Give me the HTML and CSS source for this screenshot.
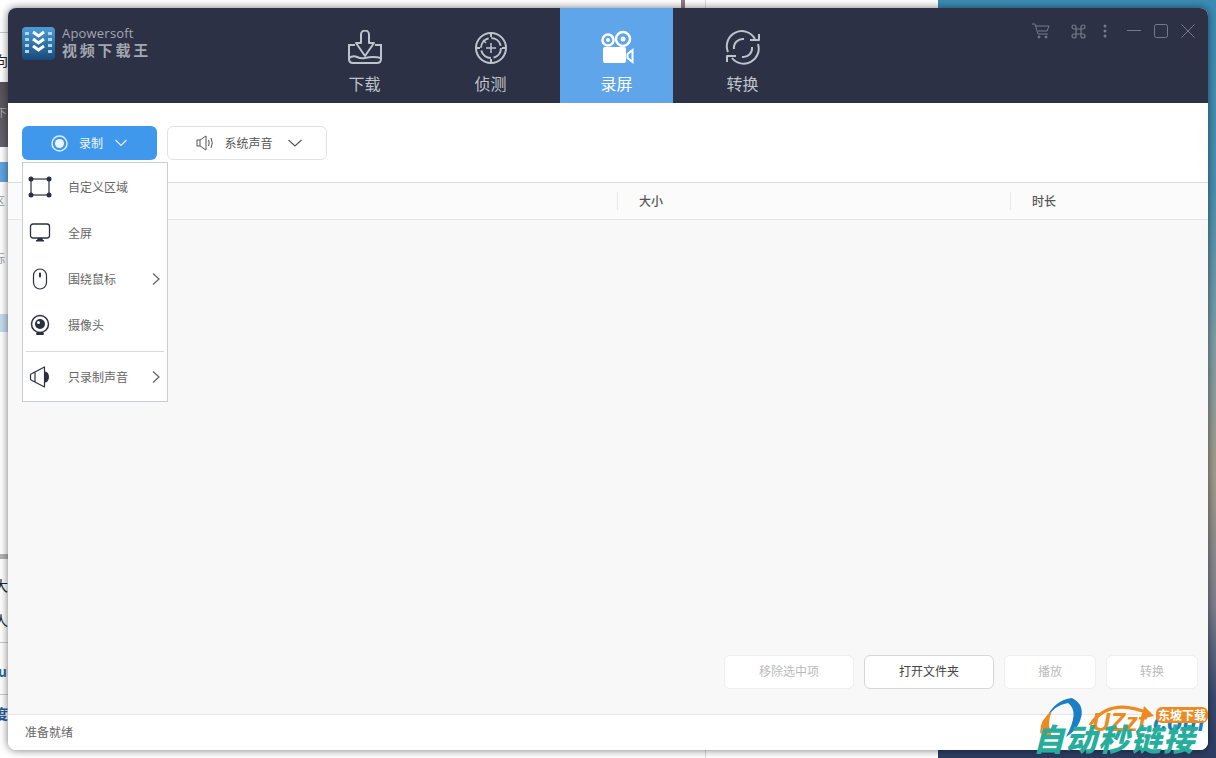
FILE: index.html
```html
<!DOCTYPE html>
<html lang="zh-CN">
<head>
<meta charset="UTF-8">
<meta name="viewport" content="width=device-width, initial-scale=1.0">
<title>Apowersoft 视频下载王</title>
<link rel="stylesheet" href="styles.css">
</head>
<body>
<!-- what is behind the app window -->
<div class="desk">
    <div class="desk-left">
        <div class="frag-line line-a"></div>
        <div class="frag frag-top">向</div>
        <div class="frag-dark">下</div>
        <div class="frag-blue"></div>
        <div class="frag frag-a">区</div>
        <div class="frag frag-b">标</div>
        <div class="frag-light"></div>
        <div class="frag-bar"></div>
        <div class="frag frag-c">大</div>
        <div class="frag frag-d">人</div>
        <div class="frag-line line-b"></div>
        <div class="frag frag-e">ul</div>
        <div class="frag-line line-c"></div>
        <div class="frag frag-f">度</div>
    </div>
    <div class="desk-rule-a"></div>
    <div class="desk-rule-b"></div>
    <div class="desk-right"></div>
</div>

<div class="window">
    <header class="topbar">
        <div class="brand">
            <svg class="brand-icon" width="33" height="33" viewBox="0 0 33 33">
                <defs>
                    <linearGradient id="brandFill" x1="0" y1="0" x2="0" y2="1">
                        <stop offset="0" stop-color="#4c9ed6"/>
                        <stop offset="1" stop-color="#174a78"/>
                    </linearGradient>
                </defs>
                <rect width="33" height="33" rx="4" fill="url(#brandFill)"/>
                <g fill="#a9d6f2">
                    <rect x="3" y="5" width="4" height="3"/><rect x="3" y="11" width="4" height="3"/><rect x="3" y="17" width="4" height="3"/><rect x="3" y="23" width="4" height="3"/>
                    <rect x="26" y="5" width="4" height="3"/><rect x="26" y="11" width="4" height="3"/><rect x="26" y="17" width="4" height="3"/><rect x="26" y="23" width="4" height="3"/>
                </g>
                <path d="M11 5l5.500 4 5.500-4M11 12l5.500 4 5.500-4M11 19l5.500 4 5.500-4" fill="none" stroke="#fff" stroke-width="3"/>
            </svg>
            <div class="brand-text">
                <div class="brand-en">Apowersoft</div>
                <div class="brand-cn">视频下载王</div>
            </div>
        </div>
        <nav class="tabs">
            <div class="tab">
                <svg width="36" height="36" viewBox="0 0 36 36" fill="none" stroke="currentColor" stroke-width="2">
                    <path d="M14 13V4.500a4 4 0 0 1 8 0V13h5l-9 13-9-13z" stroke-linejoin="round"/>
                    <path d="M8 15H2v14q0 4 4 4h24q4 0 4-4V15h-6"/>
                    <path d="M2 28q4-3 8-1t8 1 8-1 8 1"/>
                </svg>
                <span>下载</span>
            </div>
            <div class="tab">
                <svg width="36" height="36" viewBox="0 0 36 36" fill="none" stroke="currentColor" stroke-width="2">
                    <circle cx="18" cy="18" r="15"/>
                    <circle cx="18" cy="18" r="10" stroke-dasharray="13 2.700"/>
                    <path d="M18 4v3M18 29v3M4 18h3M29 18h3"/>
                    <path d="M18 13v10M13 18h10M10 10l3 3" stroke-width="1.500"/>
                </svg>
                <span>侦测</span>
            </div>
            <div class="tab tab-on">
                <svg width="36" height="36" viewBox="0 0 36 36">
                    <circle cx="9" cy="10" r="5.500" fill="none" stroke="#fff" stroke-width="2.500"/>
                    <circle cx="9" cy="10" r="2" fill="#fff"/>
                    <circle cx="24" cy="9" r="7" fill="none" stroke="#fff" stroke-width="2.500"/>
                    <circle cx="24" cy="9" r="2.500" fill="#fff"/>
                    <rect x="4" y="17" width="23" height="16" rx="2" fill="#fff"/>
                    <path d="M28.500 24l5-4v12l-5-4z" fill="none" stroke="#fff" stroke-width="2"/>
                </svg>
                <span>录屏</span>
            </div>
            <div class="tab">
                <svg width="36" height="36" viewBox="0 0 36 36" fill="none" stroke="currentColor" stroke-width="2">
                    <path d="M3 22A15 15 0 0 1 30 9M33 14A15 15 0 0 1 7 28"/>
                    <path d="M25 10h9V4M11 26H2v6" stroke-linejoin="round"/>
                    <path d="M9 19a9 9 0 0 1 10-10M27 17a9 9 0 0 1-10 10"/>
                </svg>
                <span>转换</span>
            </div>
        </nav>
        <div class="controls">
            <svg width="18" height="16" viewBox="0 0 18 16" fill="none" stroke="currentColor"><path d="M0 1h3l3 10h10M4 3h13l-2 5H6"/><circle cx="7" cy="14" r="1" fill="currentColor"/><circle cx="14" cy="14" r="1" fill="currentColor"/></svg>
            <svg class="ctl-cmd" width="15" height="15" viewBox="0 0 15 15" fill="none" stroke="currentColor" stroke-width="1.200"><path d="M5 5h5v5H5zM5 5H3a2 2 0 1 1 2-2zM10 5V3a2 2 0 1 1 2 2zM10 10h2a2 2 0 1 1-2 2zM5 10v2a2 2 0 1 1-2-2z"/></svg>
            <svg class="ctl-dots" width="4" height="14" viewBox="0 0 4 14" fill="currentColor"><circle cx="2" cy="2" r="1.500"/><circle cx="2" cy="7" r="1.500"/><circle cx="2" cy="12" r="1.500"/></svg>
            <svg class="ctl-min" width="14" height="14" viewBox="0 0 14 14" stroke="currentColor"><path d="M0 6.500h14"/></svg>
            <svg class="ctl-max" width="14" height="14" viewBox="0 0 14 14" fill="none" stroke="currentColor"><rect x=".5" y=".5" width="13" height="13" rx="2"/></svg>
            <svg class="ctl-close" width="14" height="14" viewBox="0 0 14 14" stroke="currentColor"><path d="M.5.500l13 13M13.500.500l-13 13"/></svg>
        </div>
    </header>

    <div class="toolbar">
        <button class="btn-record">
            <svg width="17" height="17" viewBox="0 0 17 17"><circle cx="8.500" cy="8.500" r="7.500" fill="none" stroke="#dcecfb" stroke-width="1.500"/><circle cx="8.500" cy="8.500" r="4.500" fill="#eef6fd"/></svg>
            <span>录制</span>
            <svg class="chev" width="12" height="8" viewBox="0 0 12 8" fill="none" stroke="#e6f1fc" stroke-width="1.200"><path d="M.5 1l5.500 5.500L11.500 1"/></svg>
        </button>
        <button class="btn-sound">
            <svg width="18" height="16" viewBox="0 0 18 16" fill="none" stroke="#555"><path d="M1 5h3l6-4v14l-6-4H1zM4 5v6"/><path d="M12.500 5q1.500 3 0 6M15 3q2.500 5 0 10"/></svg>
            <span>系统声音</span>
            <svg class="chev" width="14" height="8" viewBox="0 0 14 8" fill="none" stroke="#555" stroke-width="1.200"><path d="M.5 1L7 7l6.500-6"/></svg>
        </button>
    </div>

    <div class="thead">
        <div class="th"></div>
        <div class="th th-rule">大小</div>
        <div class="th th-rule">时长</div>
    </div>

    <main class="list">
        <div class="actions">
            <button class="act act-wide" disabled>移除选中项</button>
            <button class="act act-wide act-on">打开文件夹</button>
            <button class="act" disabled>播放</button>
            <button class="act" disabled>转换</button>
        </div>
    </main>

    <footer class="status">准备就绪</footer>

    <div class="menu">
        <div class="menu-row">
            <svg width="24" height="22" viewBox="0 0 24 22"><rect x="3" y="3" width="18" height="16" fill="none" stroke="#2b3040" stroke-width="1.200"/><g fill="#2b3040"><circle cx="3" cy="3" r="2.500"/><circle cx="21" cy="3" r="2.500"/><circle cx="3" cy="19" r="2.500"/><circle cx="21" cy="19" r="2.500"/></g></svg>
            <span>自定义区域</span>
        </div>
        <div class="menu-row">
            <svg width="24" height="22" viewBox="0 0 24 22"><rect x="2.500" y="2" width="19" height="14" rx="2.500" fill="none" stroke="#2b3040" stroke-width="1.300"/><path d="M10 16h4l1 2H9z" fill="#2b3040"/><rect x="8" y="18" width="8" height="1.500" fill="#2b3040"/></svg>
            <span>全屏</span>
        </div>
        <div class="menu-row">
            <svg width="24" height="22" viewBox="0 0 24 22"><rect x="5.500" y="1" width="13" height="20" rx="6.500" fill="none" stroke="#2b3040" stroke-width="1.200"/><rect x="11" y="4.500" width="2" height="5" rx="1" fill="#2b3040"/></svg>
            <span>围绕鼠标</span>
            <svg class="more" width="8" height="12" viewBox="0 0 8 12" fill="none" stroke="#666" stroke-width="1.300"><path d="M1 .500L7 6l-6 5.500"/></svg>
        </div>
        <div class="menu-row">
            <svg width="24" height="22" viewBox="0 0 24 22"><circle cx="12" cy="10" r="8.500" fill="none" stroke="#2b3040" stroke-width="1.500"/><circle cx="12" cy="10" r="5" fill="#2b3040"/><circle cx="10.500" cy="8.500" r="1.500" fill="#fff"/><rect x="8" y="19" width="8" height="2" rx="1" fill="#2b3040"/></svg>
            <span>摄像头</span>
        </div>
        <div class="menu-line"></div>
        <div class="menu-row">
            <svg width="24" height="22" viewBox="0 0 24 22"><path d="M17 5.500a4 5.500 0 0 1 0 11z" fill="#2b3040"/><path d="M4 7.500L16.500 1v20L4 14.500q-1.500-.5-1.500-1.500V9q0-1 1.500-1.500zM7 6v10" fill="#fff" stroke="#2b3040" stroke-width="1.200" stroke-linejoin="round"/></svg>
            <span>只录制声音</span>
            <svg class="more" width="8" height="12" viewBox="0 0 8 12" fill="none" stroke="#666" stroke-width="1.300"><path d="M1 .500L7 6l-6 5.500"/></svg>
        </div>
    </div>
</div>

<!-- watermark over the corner -->
<div class="mark">
    <svg class="mark-swirl" width="50" height="42" viewBox="0 0 50 42" fill="none">
        <path d="M8 22Q16 3 34 1 48 8 42 24 38 34 28 40 42 14 30 6 16 8 8 22z" fill="#1b7fc4"/>
        <path d="M2 36Q2 22 14 14 8 26 14 40z" fill="#ee8a22"/>
    </svg>
    <svg class="mark-arc" width="70" height="26" viewBox="0 0 70 26" fill="none" stroke="#ee8a22" stroke-width="3"><path d="M2 25Q22-4 62 14"/><path d="M56 6l10 10-13 3z" fill="#ee8a22" stroke="none"/></svg>
    <span class="mark-site">UZzf<i>.com</i></span>
    <span class="mark-badge">东坡下载</span>
    <span class="mark-big">自动秒链接</span>
</div>
</body>
</html>
```

FILE: styles.css
```css
/* Basic styling */
html, body {
    height: 100%;
}
body {
    margin: 0;
    overflow: hidden;
    background: #fff;
    font-family: "Noto Sans CJK SC", "Liberation Sans", sans-serif;
    font-size: 12px;
    color: #555;
}
button {
    font: inherit;
    padding: 0;
    cursor: pointer;
}

/* desktop behind the window */
.desk {
    position: absolute;
    inset: 0;
}
.desk-left {
    position: absolute;
    left: 0;
    top: 0;
    width: 8px;
    height: 100%;
    overflow: hidden;
}
.frag {
    position: absolute;
    left: -6px;
    font-size: 14px;
    line-height: 16px;
    color: #222;
}
.frag-top { top: 52px; }
.frag-a { top: 192px; font-size: 11px; color: #999; }
.frag-b { top: 250px; font-size: 11px; color: #999; }
.frag-c { top: 577px; }
.frag-d { top: 612px; }
.frag-e { top: 663px; left: -2px; font-weight: bold; color: #2a6a94; }
.frag-f { top: 705px; font-weight: bold; color: #2a5a94; }
.frag-line {
    position: absolute;
    width: 8px;
    height: 1px;
    background: #ccc;
}
.line-a { top: 32px; }
.line-b { top: 642px; }
.line-c { top: 694px; }
.frag-dark {
    position: absolute;
    top: 82px;
    width: 8px;
    height: 65px;
    background: linear-gradient(#56525a, #67636f);
    color: #aaa;
    font-size: 11px;
    line-height: 60px;
    text-indent: -4px;
}
.frag-blue {
    position: absolute;
    top: 162px;
    width: 8px;
    height: 20px;
    background: #62a4e4;
}
.frag-light {
    position: absolute;
    top: 314px;
    width: 8px;
    height: 18px;
    background: #c4dcee;
}
.frag-bar {
    position: absolute;
    top: 554px;
    width: 8px;
    height: 5px;
    background: #b4b4b4;
}
.desk-rule-a {
    position: absolute;
    left: 681px;
    top: 0;
    width: 4px;
    height: 8px;
    background: #8d7d84;
}
.desk-rule-b {
    position: absolute;
    left: 705px;
    top: 0;
    width: 1px;
    height: 100%;
    background: #ddd;
}
.desk-right {
    position: absolute;
    left: 938px;
    right: 0;
    top: 0;
    bottom: 0;
    background: linear-gradient(#3b8cb4 0, #4a90b0 25%, #7f9ea6 45%, #a39c8e 62%, #7d7f8c 80%, #3a4a70 92%, #2c3c62 100%);
}

/* app window */
.window {
    position: absolute;
    left: 8px;
    top: 8px;
    width: 1200px;
    height: 742px;
    display: flex;
    flex-direction: column;
    border-radius: 8px;
    background: #fff;
    box-shadow: 0 0 8px rgba(0, 0, 0, .55);
}
.topbar {
    display: flex;
    height: 95px;
    flex-shrink: 0;
    background: #2c3145;
    border-radius: 8px 8px 0 0;
    color: #bfc3cc;
}
.brand {
    width: 300px;
    box-sizing: border-box;
    padding: 19px 0 0 14px;
    display: flex;
    gap: 7px;
}
.brand-text {
    margin-top: -2px;
    color: #a3a7b1;
}
.brand-en {
    font-family: "Open Sans", sans-serif;
    font-size: 13px;
    line-height: 16px;
    letter-spacing: .2px;
}
.brand-cn {
    font-size: 15px;
    font-weight: bold;
    line-height: 18px;
    letter-spacing: 2.800px;
}
.tabs {
    display: flex;
    gap: 13px;
}
.tab {
    width: 113px;
    box-sizing: border-box;
    padding-top: 22px;
    display: flex;
    flex-direction: column;
    align-items: center;
    gap: 6px;
}
.tab span {
    font-size: 16px;
    line-height: 22px;
}
.tab-on {
    background: #5fa5ea;
    color: #fff;
}
.controls {
    margin-left: auto;
    padding: 15px 13px 0 0;
    display: flex;
    align-items: flex-start;
    color: #767b8a;
}
.ctl-cmd { margin: 1px 0 0 21px; }
.ctl-dots { margin: 1px 0 0 17px; }
.ctl-min { margin: 1px 0 0 20px; }
.ctl-max { margin: 1px 0 0 13px; }
.ctl-close { margin: 1px 0 0 13px; }

/* toolbar */
.toolbar {
    height: 80px;
    flex-shrink: 0;
    box-sizing: border-box;
    padding: 23px 14px 0;
    display: flex;
    gap: 10px;
    align-items: flex-start;
    border-bottom: 1px solid #dcdcdc;
}
.btn-record, .btn-sound {
    height: 34px;
    display: flex;
    align-items: center;
    justify-content: center;
    border-radius: 6px;
}
.btn-record span, .btn-sound span {
    margin-top: -2px;
}
.btn-record {
    width: 135px;
    padding-right: 1px;
    gap: 11px;
    border: none;
    background: #4098ec;
    color: #f0f6fd;
}
.btn-record .chev {
    margin-left: 1px;
}
.btn-sound {
    width: 160px;
    padding-left: 4px;
    gap: 10px;
    border: 1px solid #e2e2e2;
    background: #fff;
    color: #555;
}
.btn-sound .chev {
    margin-left: 5px;
}

/* list */
.thead {
    height: 37px;
    flex-shrink: 0;
    box-sizing: border-box;
    display: grid;
    grid-template-columns: 609px 393px 1fr;
    align-items: center;
    background: #fbfbfb;
    border-bottom: 1px solid #e6e6e6;
}
.th {
    height: 18px;
    line-height: 18px;
    color: #555;
    font-weight: 500;
}
.th-rule {
    padding-left: 21px;
    border-left: 1px solid #e8e8e8;
}
.list {
    flex: 1;
    display: flex;
    flex-direction: column;
    justify-content: flex-end;
    background: #f8f8f8;
}
.actions {
    padding: 0 10px 25px 0;
    display: flex;
    justify-content: flex-end;
    gap: 10px;
}
.act {
    width: 92px;
    height: 34px;
    padding-bottom: 3px;
    background: #fff;
    border: 1px solid #eee;
    border-radius: 6px;
    color: #bbb;
}
.act-wide {
    width: 130px;
}
.act-on {
    border-color: #d6d6d6;
    color: #444;
}
.status {
    height: 36px;
    flex-shrink: 0;
    box-sizing: border-box;
    padding-left: 17px;
    line-height: 34px;
    background: #fff;
    border-top: 1px solid #e6e6e6;
    border-radius: 0 0 8px 8px;
    color: #666;
}

/* record drop-down */
.menu {
    position: absolute;
    left: 14px;
    top: 154px;
    width: 146px;
    height: 240px;
    box-sizing: border-box;
    padding-top: 1px;
    background: #fff;
    border: 1px solid #c9ced3;
}
.menu-row {
    position: relative;
    height: 46px;
    padding-left: 5px;
    display: flex;
    align-items: center;
    gap: 16px;
    color: #666;
}
.menu-row span {
    margin-top: -2px;
}
.more {
    position: absolute;
    right: 7px;
    top: 17px;
}
.menu-line {
    height: 1px;
    margin: 3px 3px 2px;
    background: #d9d9d9;
}

/* watermark */
.mark {
    position: absolute;
    left: 1030px;
    top: 694px;
    width: 186px;
    height: 60px;
}
.mark-swirl {
    position: absolute;
    left: 8px;
    top: 3px;
}
.mark-arc {
    position: absolute;
    left: 58px;
    top: 6px;
}
.mark-site {
    position: absolute;
    left: 62px;
    top: 13px;
    font-family: "Liberation Sans", sans-serif;
    font-size: 25px;
    line-height: 30px;
    font-weight: bold;
    font-style: italic;
    color: #ee8a22;
}
.mark-site i {
    color: #1b7fc4;
}
.mark-badge {
    position: absolute;
    left: 126px;
    top: 13px;
    width: 52px;
    height: 16px;
    border-radius: 6px;
    background: #ee8a22;
    color: #fff;
    font-size: 12px;
    font-weight: bold;
    line-height: 16px;
    text-align: center;
}
.mark-big {
    position: absolute;
    left: 3px;
    top: 27px;
    font-size: 31px;
    line-height: 34px;
    font-weight: 900;
    font-style: italic;
    letter-spacing: 1.500px;
    color: #27ad9c;
    white-space: nowrap;
}
```
